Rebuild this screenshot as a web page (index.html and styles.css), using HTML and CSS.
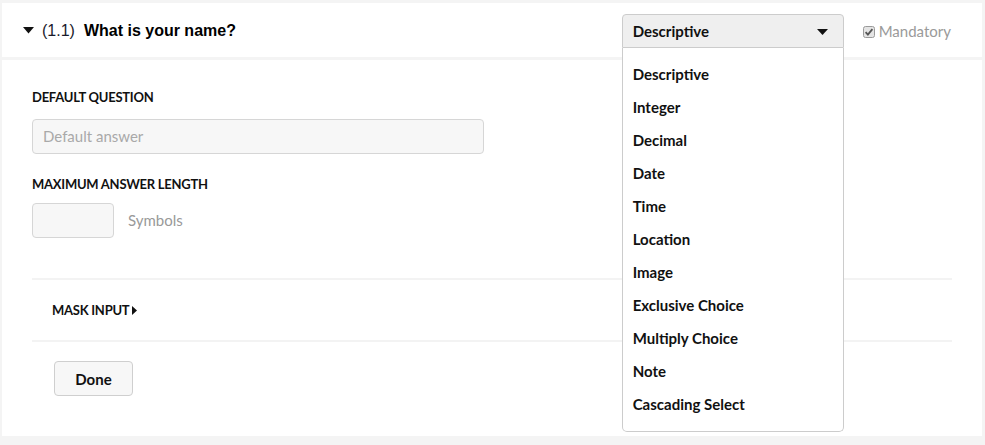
FILE: index.html
```html
<!DOCTYPE html>
<html lang="en">
<head>
<meta charset="utf-8">
<title>Question</title>
<link rel="stylesheet" href="styles.css">
</head>
<body>
<div class="card">
  <div class="card-head">
    <svg class="caret-down" width="11" height="7" viewBox="0 0 11 7"><path d="M0 0H11L5.5 6.5Z" fill="#111"/></svg>
    <span class="q-num">(1.1)</span>
    <span class="q-title">What is your name?</span>
    <div class="select">
      <div class="select-btn">
        <span>Descriptive</span>
        <svg width="11" height="6" viewBox="0 0 11 6"><path d="M0 0H11L5.5 6Z" fill="#111"/></svg>
      </div>
      <ul class="select-menu">
        <li>Descriptive</li>
        <li>Integer</li>
        <li>Decimal</li>
        <li>Date</li>
        <li>Time</li>
        <li>Location</li>
        <li>Image</li>
        <li>Exclusive Choice</li>
        <li>Multiply Choice</li>
        <li>Note</li>
        <li>Cascading Select</li>
      </ul>
    </div>
    <label class="mandatory">
      <svg class="check" width="12" height="12" viewBox="0 0 12 12"><rect x="0.5" y="0.5" width="11" height="11" rx="2" fill="#e4e4e4" stroke="#9a9a9a"/><path d="M2.6 6.2L4.9 8.6L9.4 3.2" fill="none" stroke="#555" stroke-width="1.8"/></svg>
      <span>Mandatory</span>
    </label>
  </div>
  <div class="card-body">
    <div class="field-label first">DEFAULT QUESTION</div>
    <div class="input wide"><span class="placeholder">Default answer</span></div>
    <div class="field-label second">MAXIMUM ANSWER LENGTH</div>
    <div class="length-row">
      <div class="input small"></div>
      <span class="unit">Symbols</span>
    </div>
    <div class="mask-row">
      <span>MASK INPUT</span>
      <svg width="5" height="9" viewBox="0 0 5 9"><path d="M0 0L5 4.5L0 9Z" fill="#111"/></svg>
    </div>
    <div class="btn-row">
      <button class="btn">Done</button>
    </div>
  </div>
</div>
</body>
</html>
```
FILE: styles.css
```css
* { box-sizing: border-box; }
html, body { margin: 0; padding: 0; }
body {
  background: #f4f4f4;
  font-family: Lato, "Noto Sans", sans-serif;
  color: #111;
  width: 985px;
  height: 445px;
  overflow: hidden;
}
.card {
  margin: 3px 3px 0 2px;
  width: 980px;
}
.card-head {
  position: relative;
  background: #fff;
  height: 54px;
  display: flex;
  align-items: center;
  padding: 2px 31px 0 21px;
}
.caret-down { margin-top: -2px; }
.q-num {
  font-family: "Liberation Sans", Arial, sans-serif;
  font-size: 16px;
  color: #1a1a2a;
  margin-left: 8px;
}
.q-title {
  font-family: "Liberation Sans", Arial, sans-serif;
  font-size: 16px;
  font-weight: bold;
  color: #000;
  margin-left: 9px;
}
.select {
  position: relative;
  margin-left: auto;
  width: 222px;
  align-self: flex-start;
  margin-top: 9px;
}
.select-btn {
  height: 34px;
  background: #efefef;
  border: 1px solid #cccccc;
  border-radius: 4px 4px 0 0;
  display: flex;
  align-items: center;
  justify-content: space-between;
  padding: 0 15px 0 10px;
  font-size: 15px;
  font-weight: bold;
  color: #111;
}
.select-btn svg { margin-top: 1px; }
.select-menu {
  position: absolute;
  left: 0;
  top: 34px;
  width: 222px;
  height: 384px;
  margin: 0;
  padding: 10px 0 0 0;
  list-style: none;
  background: #fff;
  border: 1px solid #cccccc;
  border-top: none;
  border-radius: 0 0 5px 5px;
  z-index: 2;
}
.select-menu li {
  height: 33px;
  line-height: 33px;
  padding-left: 10px;
  font-size: 15px;
  font-weight: bold;
  color: #111;
}
.mandatory {
  margin-left: 19px;
  display: flex;
  align-items: center;
  font-size: 15px;
  color: #9a9a9a;
}
.check { margin-right: 4px; margin-top: 1px; }
.card-body {
  background: #fff;
  margin-top: 3px;
  height: 376px;
  padding: 30px 30px 0 30px;
}
.field-label {
  font-size: 13px;
  font-weight: bold;
  line-height: 15px;
  color: #111;
  letter-spacing: -0.25px;
}
.input {
  background: #f7f7f7;
  border: 1px solid #d6d6d6;
  border-radius: 4px;
  height: 35px;
}
.wide {
  width: 452px;
  margin-top: 14px;
  display: flex;
  align-items: center;
  padding-left: 10px;
}
.placeholder {
  font-size: 15px;
  color: #a9a9a9;
  margin-top: -1px;
}
.second { margin-top: 23px; }
.length-row {
  margin-top: 11px;
  display: flex;
  align-items: center;
}
.small { width: 82px; }
.unit {
  margin-left: 14px;
  font-size: 15px;
  color: #999;
  margin-top: -2px;
}
.mask-row {
  margin-top: 40px;
  height: 64px;
  border-top: 2px solid #f3f3f3;
  border-bottom: 2px solid #f3f3f3;
  display: flex;
  align-items: center;
  padding-left: 20px;
  font-size: 13px;
  font-weight: bold;
  letter-spacing: -0.25px;
}
.mask-row svg { margin-left: 3px; }
.btn-row {
  padding: 19px 0 0 22px;
}
.btn {
  width: 79px;
  height: 35px;
  background: #f7f7f7;
  border: 1px solid #cfcfcf;
  border-radius: 4px;
  font-family: Lato, "Noto Sans", sans-serif;
  font-size: 15px;
  font-weight: bold;
  color: #111;
  padding: 0;
}
```
